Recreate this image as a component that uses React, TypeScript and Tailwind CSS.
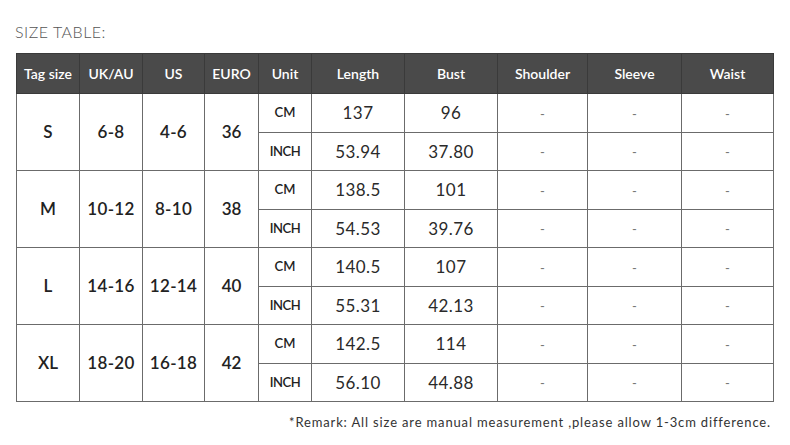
const widths = [63, 63, 62, 54, 53, 93, 93, 90, 94, 92];
const heads = ["Tag size", "UK/AU", "US", "EURO", "Unit", "Length", "Bust", "Shoulder", "Sleeve", "Waist"];

const sizes = [
  { tag: "S", uk: "6-8", us: "4-6", euro: "36", cm: ["137", "96"], inch: ["53.94", "37.80"] },
  { tag: "M", uk: "10-12", us: "8-10", euro: "38", cm: ["138.5", "101"], inch: ["54.53", "39.76"] },
  { tag: "L", uk: "14-16", us: "12-14", euro: "40", cm: ["140.5", "107"], inch: ["55.31", "42.13"] },
  { tag: "XL", uk: "18-20", us: "16-18", euro: "42", cm: ["142.5", "114"], inch: ["56.10", "44.88"] },
];

const cell = "border border-[#6b6b6b] text-center align-middle p-0";
const num = " text-[17px] font-normal tracking-[0.4px] text-[#2a2a2a]";

function Dash() {
  return <span className="text-[#777] text-[13px]">-</span>;
}

export default function App() {
  return (
    <div
      className="w-[790px] h-[445px] bg-white text-[#222] overflow-hidden"
      style={{ fontFamily: "Lato, 'Noto Sans', sans-serif" }}
    >
      <div className="pt-[22px] pl-[15px] text-[16px] font-light tracking-[0.5px] text-[#555] leading-[20px]">
        SIZE TABLE:
      </div>

      <table className="ml-[16px] mt-[11px] border-collapse table-fixed w-[757px]">
        <colgroup>
          {widths.map((w, i) => (
            <col key={i} style={{ width: w }} />
          ))}
        </colgroup>
        <thead>
          <tr className="h-[40px] bg-[#4a4a4a]">
            {heads.map((h) => (
              <th
                key={h}
                className="border border-[#3a3a3a] text-white text-[14px] font-semibold tracking-[0px] text-center align-middle p-0"
              >
                {h}
              </th>
            ))}
          </tr>
        </thead>
        <tbody>
          {sizes.map((s) => (
            <>
              <tr key={s.tag + "cm"} className="h-[38.5px]">
                <td rowSpan={2} className={cell + " text-[17px] font-semibold"}>
                  {s.tag}
                </td>
                <td rowSpan={2} className={cell + " text-[17px] font-semibold tracking-[0.3px]"}>
                  {s.uk}
                </td>
                <td rowSpan={2} className={cell + " text-[17px] font-semibold tracking-[0.3px]"}>
                  {s.us}
                </td>
                <td rowSpan={2} className={cell + " text-[17px] font-semibold"}>
                  {s.euro}
                </td>
                <td className={cell + " text-[13px] font-semibold"}>CM</td>
                <td className={cell + num}>{s.cm[0]}</td>
                <td className={cell + num}>{s.cm[1]}</td>
                <td className={cell}><Dash /></td>
                <td className={cell}><Dash /></td>
                <td className={cell}><Dash /></td>
              </tr>
              <tr key={s.tag + "in"} className="h-[38.5px]">
                <td className={cell + " text-[13px] font-semibold tracking-[-0.4px]"}>INCH</td>
                <td className={cell + num}>{s.inch[0]}</td>
                <td className={cell + num}>{s.inch[1]}</td>
                <td className={cell}><Dash /></td>
                <td className={cell}><Dash /></td>
                <td className={cell}><Dash /></td>
              </tr>
            </>
          ))}
        </tbody>
      </table>

      <div className="w-[771px] mt-[12px] text-right text-[13px] text-[#333] tracking-[0.85px] leading-[16px]">
        *Remark: All size are manual measurement ,please allow 1-3cm difference.
      </div>
    </div>
  );
}
